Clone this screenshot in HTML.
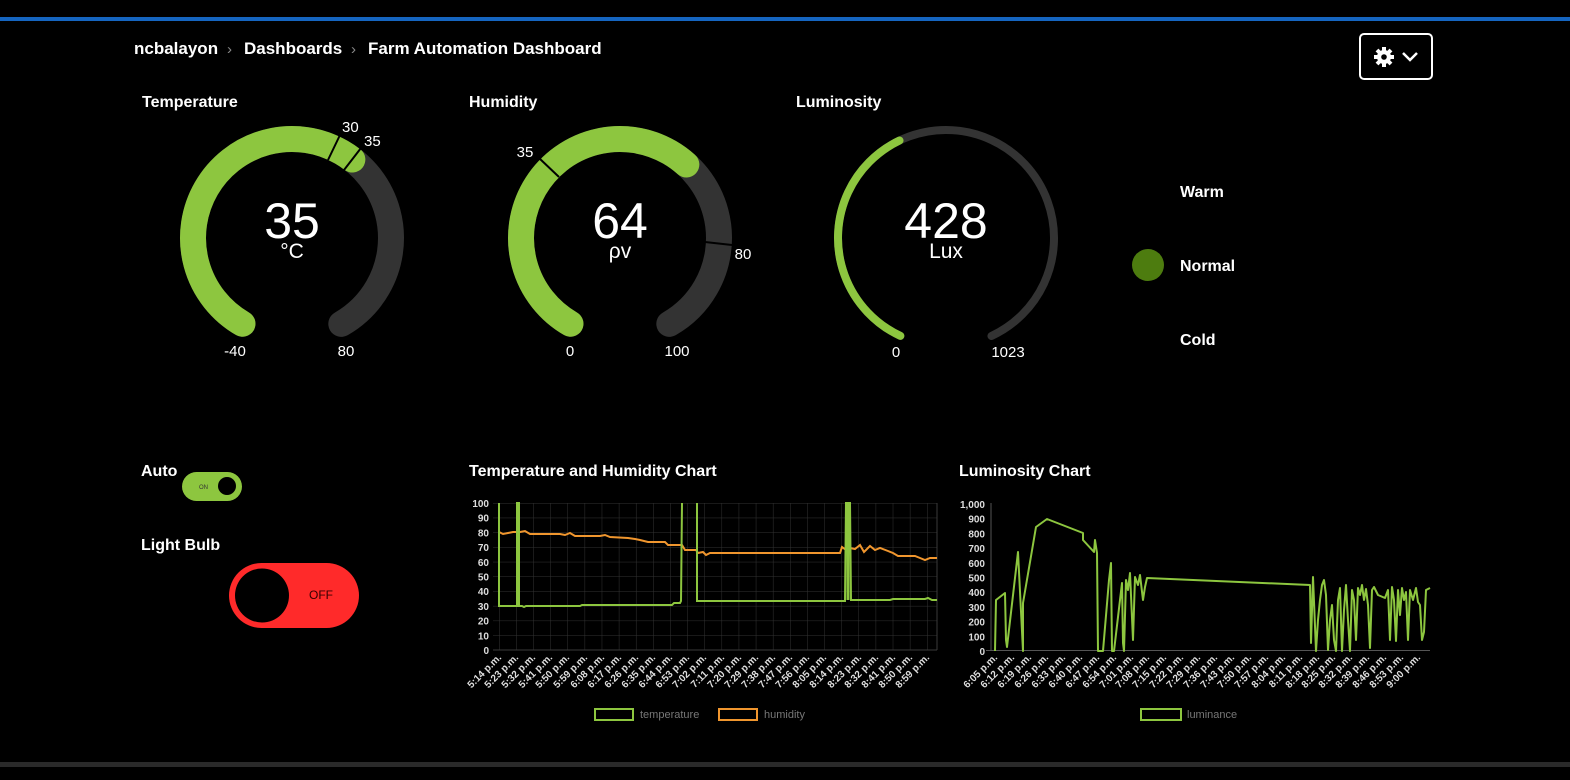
<!DOCTYPE html>
<html><head><meta charset="utf-8"><style>
html,body{margin:0;padding:0;background:#000;width:1570px;height:780px;overflow:hidden}
svg{display:block}
text{font-family:"Liberation Sans",Arial,sans-serif}
</style></head><body>
<svg width="1570" height="780" viewBox="0 0 1570 780" xmlns="http://www.w3.org/2000/svg">
<defs>
<pattern id="g1" x="499" y="503" width="17.12" height="14.7" patternUnits="userSpaceOnUse">
<path d="M0 0H17.12M0 0V14.7" stroke="#333" stroke-width="1" fill="none"/>
</pattern>
</defs>
<rect width="1570" height="780" fill="#000"/>
<rect x="0" y="17" width="1570" height="4" fill="#1565c0"/>
<rect x="0" y="762" width="1570" height="5" fill="#2a2a2a"/>

<text x="134" y="54" fill="#fff" font-size="17" font-weight="bold">ncbalayon</text>
<text x="227" y="54" fill="#888" font-size="15">›</text>
<text x="244" y="54" fill="#fff" font-size="17" font-weight="bold">Dashboards</text>
<text x="351" y="54" fill="#888" font-size="15">›</text>
<text x="368" y="54" fill="#fff" font-size="17" font-weight="bold">Farm Automation Dashboard</text>

<rect x="1360" y="34" width="72" height="45" rx="4" fill="none" stroke="#fff" stroke-width="2"/>
<g transform="translate(1384,57)" fill="#fff">
<circle r="7"/>
<g stroke="#fff" stroke-width="4">
<line x1="0" y1="-10" x2="0" y2="10"/><line x1="-10" y1="0" x2="10" y2="0"/>
<line x1="-7" y1="-7" x2="7" y2="7"/><line x1="-7" y1="7" x2="7" y2="-7"/>
</g>
<circle r="2.8" fill="#000"/>
</g>
<path d="M1403 53 L1410 60 L1417 53" stroke="#fff" stroke-width="2.5" fill="none"/>

<text x="142" y="107" fill="#fff" font-size="16" font-weight="bold">Temperature</text>
<text x="469" y="107" fill="#fff" font-size="16" font-weight="bold">Humidity</text>
<text x="796" y="107" fill="#fff" font-size="16" font-weight="bold">Luminosity</text>

<!-- Temperature gauge -->
<g transform="translate(292,238) rotate(120)">
<circle r="99" fill="none" stroke="#333" stroke-width="26" stroke-linecap="round" stroke-dasharray="518.4 1000"/>
<circle r="99" fill="none" stroke="#8dc63f" stroke-width="26" stroke-linecap="round" stroke-dasharray="324 1000"/>
</g>
<line x1="328" y1="160" x2="340" y2="135" stroke="#000" stroke-width="2"/>
<line x1="344" y1="170" x2="361" y2="148" stroke="#000" stroke-width="2"/>
<text x="342" y="132" fill="#fff" font-size="15">30</text>
<text x="364" y="146" fill="#fff" font-size="15">35</text>
<text x="292" y="238" fill="#fff" font-size="50" text-anchor="middle">35</text>
<text x="292" y="258" fill="#fff" font-size="21" text-anchor="middle">°C</text>
<text x="235" y="356" fill="#fff" font-size="15" text-anchor="middle">-40</text>
<text x="346" y="356" fill="#fff" font-size="15" text-anchor="middle">80</text>

<!-- Humidity gauge -->
<g transform="translate(620,238) rotate(120)">
<circle r="99" fill="none" stroke="#333" stroke-width="26" stroke-linecap="round" stroke-dasharray="518.4 1000"/>
<circle r="99" fill="none" stroke="#8dc63f" stroke-width="26" stroke-linecap="round" stroke-dasharray="331.8 1000"/>
</g>
<line x1="559" y1="177" x2="539" y2="158" stroke="#000" stroke-width="2"/>
<line x1="705" y1="242" x2="732" y2="245" stroke="#000" stroke-width="2"/>
<text x="525" y="157" fill="#fff" font-size="15" text-anchor="middle">35</text>
<text x="743" y="259" fill="#fff" font-size="15" text-anchor="middle">80</text>
<text x="620" y="238" fill="#fff" font-size="50" text-anchor="middle">64</text>
<text x="620" y="258" fill="#fff" font-size="21" text-anchor="middle">ρv</text>
<text x="570" y="356" fill="#fff" font-size="15" text-anchor="middle">0</text>
<text x="677" y="356" fill="#fff" font-size="15" text-anchor="middle">100</text>

<!-- Luminosity gauge -->
<g transform="translate(946,238) rotate(115)">
<circle r="108" fill="none" stroke="#333" stroke-width="8" stroke-linecap="round" stroke-dasharray="584.3 1000"/>
<circle r="108" fill="none" stroke="#8dc63f" stroke-width="8" stroke-linecap="round" stroke-dasharray="244 1000"/>
</g>
<text x="946" y="238" fill="#fff" font-size="50" text-anchor="middle">428</text>
<text x="946" y="258" fill="#fff" font-size="21" text-anchor="middle">Lux</text>
<text x="896" y="357" fill="#fff" font-size="15" text-anchor="middle">0</text>
<text x="1008" y="357" fill="#fff" font-size="15" text-anchor="middle">1023</text>

<text x="1180" y="197" fill="#fff" font-size="16" font-weight="bold">Warm</text>
<circle cx="1148" cy="265" r="16" fill="#4d7c0f"/>
<text x="1180" y="271" fill="#fff" font-size="16" font-weight="bold">Normal</text>
<text x="1180" y="345" fill="#fff" font-size="16" font-weight="bold">Cold</text>

<text x="141" y="476" fill="#fff" font-size="16" font-weight="bold">Auto</text>
<rect x="182" y="472" width="60" height="29" rx="14.5" fill="#8dc63f"/>
<text x="199" y="489" fill="#333" font-size="6">ON</text>
<circle cx="227" cy="486" r="9" fill="#000"/>
<text x="141" y="550" fill="#fff" font-size="16" font-weight="bold">Light Bulb</text>
<rect x="229" y="563" width="130" height="65" rx="32.5" fill="#ff2a2a"/>
<circle cx="262" cy="595.5" r="27" fill="#000"/>
<text x="321" y="599" fill="#300" font-size="12" text-anchor="middle">OFF</text>

<text x="469" y="476" fill="#fff" font-size="16" font-weight="bold">Temperature and Humidity Chart</text>
<rect x="493" y="503" width="444" height="147" fill="url(#g1)"/>
<line x1="493" y1="650" x2="937" y2="650" stroke="#3a3a3a"/>
<line x1="937" y1="503" x2="937" y2="650" stroke="#3a3a3a"/>
<g fill="#ddd" font-size="10" font-weight="bold" text-anchor="end">
<text x="489" y="507">100</text><text x="489" y="521.7">90</text><text x="489" y="536.4">80</text><text x="489" y="551.1">70</text><text x="489" y="565.8">60</text><text x="489" y="580.5">50</text><text x="489" y="595.2">40</text><text x="489" y="609.9">30</text><text x="489" y="624.6">20</text><text x="489" y="639.3">10</text><text x="489" y="654">0</text>
</g>
<g fill="#ddd" font-size="10" font-weight="bold" text-anchor="end">
<text transform="translate(502,658) rotate(-45)">5:14 p.m.</text>
<text transform="translate(519,658) rotate(-45)">5:23 p.m.</text>
<text transform="translate(536,658) rotate(-45)">5:32 p.m.</text>
<text transform="translate(553,658) rotate(-45)">5:41 p.m.</text>
<text transform="translate(570,658) rotate(-45)">5:50 p.m.</text>
<text transform="translate(588,658) rotate(-45)">5:59 p.m.</text>
<text transform="translate(605,658) rotate(-45)">6:08 p.m.</text>
<text transform="translate(622,658) rotate(-45)">6:17 p.m.</text>
<text transform="translate(639,658) rotate(-45)">6:26 p.m.</text>
<text transform="translate(656,658) rotate(-45)">6:35 p.m.</text>
<text transform="translate(673,658) rotate(-45)">6:44 p.m.</text>
<text transform="translate(690,658) rotate(-45)">6:53 p.m.</text>
<text transform="translate(707,658) rotate(-45)">7:02 p.m.</text>
<text transform="translate(725,658) rotate(-45)">7:11 p.m.</text>
<text transform="translate(742,658) rotate(-45)">7:20 p.m.</text>
<text transform="translate(759,658) rotate(-45)">7:29 p.m.</text>
<text transform="translate(776,658) rotate(-45)">7:38 p.m.</text>
<text transform="translate(793,658) rotate(-45)">7:47 p.m.</text>
<text transform="translate(810,658) rotate(-45)">7:56 p.m.</text>
<text transform="translate(827,658) rotate(-45)">8:05 p.m.</text>
<text transform="translate(844,658) rotate(-45)">8:14 p.m.</text>
<text transform="translate(862,658) rotate(-45)">8:23 p.m.</text>
<text transform="translate(879,658) rotate(-45)">8:32 p.m.</text>
<text transform="translate(896,658) rotate(-45)">8:41 p.m.</text>
<text transform="translate(913,658) rotate(-45)">8:50 p.m.</text>
<text transform="translate(930,658) rotate(-45)">8:59 p.m.</text>
</g>
<polyline fill="none" stroke="#f0962e" stroke-width="2" points="499,532 503,534 508,533 513,532 520,532 525,531 530,534 560,534 565,535 570,533 575,536 600,536 605,535 610,537 628,538 635,539 640,540 648,542 665,542 668,545 682,545 685,550 696,550 698,553 703,552 706,555 710,553 715,553 840,553 842,547 846,550 850,548 855,549 860,545 864,552 870,546 875,550 880,548 888,551 893,553 898,556 915,556 920,558 925,560 930,558 937,558"/>
<polyline fill="none" stroke="#8dc63f" stroke-width="2" points="499,503 499,606 517,606 517,503 519,503 519,606 522,606 524,607 526,606 580,606 582,605 672,605 674,603 680,603 681,601 682,503"/>
<polyline fill="none" stroke="#8dc63f" stroke-width="2" points="697,503 697,601 845,601 846,503 850,503 851,600 890,600 893,599 925,599 928,598 932,600 937,600"/>
<line x1="848" y1="503" x2="848" y2="600" stroke="#8dc63f" stroke-width="3"/>
<rect x="595" y="709" width="38" height="11" fill="none" stroke="#8dc63f" stroke-width="2"/>
<text x="640" y="718" fill="#777" font-size="11">temperature</text>
<rect x="719" y="709" width="38" height="11" fill="none" stroke="#f0962e" stroke-width="2"/>
<text x="764" y="718" fill="#777" font-size="11">humidity</text>

<text x="959" y="476" fill="#fff" font-size="16" font-weight="bold">Luminosity Chart</text>
<line x1="991" y1="503" x2="991" y2="651" stroke="#555"/>
<line x1="986" y1="650.5" x2="1430" y2="650.5" stroke="#555"/>
<g fill="#ddd" font-size="10" font-weight="bold" text-anchor="end">
<text x="985" y="508">1,000</text><text x="985" y="522.7">900</text><text x="985" y="537.4">800</text><text x="985" y="552.1">700</text><text x="985" y="566.8">600</text><text x="985" y="581.5">500</text><text x="985" y="596.2">400</text><text x="985" y="610.9">300</text><text x="985" y="625.6">200</text><text x="985" y="640.3">100</text><text x="985" y="655">0</text>
</g>
<g fill="#ddd" font-size="10" font-weight="bold" text-anchor="end">
<text transform="translate(998,658) rotate(-45)">6:05 p.m.</text>
<text transform="translate(1015,658) rotate(-45)">6:12 p.m.</text>
<text transform="translate(1032,658) rotate(-45)">6:19 p.m.</text>
<text transform="translate(1049,658) rotate(-45)">6:26 p.m.</text>
<text transform="translate(1066,658) rotate(-45)">6:33 p.m.</text>
<text transform="translate(1083,658) rotate(-45)">6:40 p.m.</text>
<text transform="translate(1100,658) rotate(-45)">6:47 p.m.</text>
<text transform="translate(1117,658) rotate(-45)">6:54 p.m.</text>
<text transform="translate(1134,658) rotate(-45)">7:01 p.m.</text>
<text transform="translate(1150,658) rotate(-45)">7:08 p.m.</text>
<text transform="translate(1167,658) rotate(-45)">7:15 p.m.</text>
<text transform="translate(1184,658) rotate(-45)">7:22 p.m.</text>
<text transform="translate(1201,658) rotate(-45)">7:29 p.m.</text>
<text transform="translate(1218,658) rotate(-45)">7:36 p.m.</text>
<text transform="translate(1235,658) rotate(-45)">7:43 p.m.</text>
<text transform="translate(1252,658) rotate(-45)">7:50 p.m.</text>
<text transform="translate(1269,658) rotate(-45)">7:57 p.m.</text>
<text transform="translate(1286,658) rotate(-45)">8:04 p.m.</text>
<text transform="translate(1303,658) rotate(-45)">8:11 p.m.</text>
<text transform="translate(1320,658) rotate(-45)">8:18 p.m.</text>
<text transform="translate(1336,658) rotate(-45)">8:25 p.m.</text>
<text transform="translate(1353,658) rotate(-45)">8:32 p.m.</text>
<text transform="translate(1370,658) rotate(-45)">8:39 p.m.</text>
<text transform="translate(1387,658) rotate(-45)">8:46 p.m.</text>
<text transform="translate(1404,658) rotate(-45)">8:53 p.m.</text>
<text transform="translate(1421,658) rotate(-45)">9:00 p.m.</text>
</g>
<polyline fill="none" stroke="#8dc63f" stroke-width="2" stroke-linejoin="round" points="995,651 996,600 1005,593 1006,640 1007,647 1018,552 1023,651 1023,603 1036,527 1047,519 1083,533 1083,540 1094,552 1095,540 1097,553 1098,651 1103,651 1109,580 1111,563 1112,651 1114,651 1122,583 1123,643 1124,651 1126,580 1128,590 1130,573 1133,640 1135,577 1138,585 1140,575 1143,600 1145,587 1147,578 1310,585 1311,643 1313,577 1316,651 1318,620 1320,600 1322,585 1324,580 1326,595 1328,650 1330,620 1332,605 1334,640 1336,651 1338,600 1340,588 1342,651 1344,610 1346,585 1348,620 1350,651 1352,590 1354,600 1356,640 1358,588 1360,595 1362,585 1364,600 1366,589 1368,605 1370,648 1372,590 1374,587 1378,595 1385,598 1388,590 1390,640 1392,587 1394,600 1396,641 1398,590 1400,615 1402,588 1404,600 1406,592 1408,640 1410,590 1413,600 1416,588 1418,602 1420,605 1422,640 1424,632 1426,590 1430,588"/>
<rect x="1141" y="709" width="40" height="11" fill="none" stroke="#8dc63f" stroke-width="2"/>
<text x="1187" y="718" fill="#777" font-size="11">luminance</text>
</svg>
</body></html>
